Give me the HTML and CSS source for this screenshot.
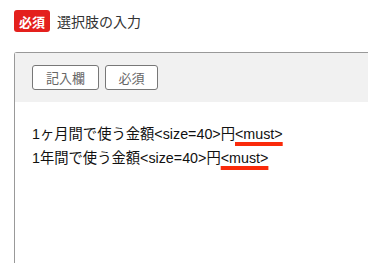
FILE: index.html
```html
<!DOCTYPE html>
<html lang="ja">
  <head>
    <meta charset="UTF-8" />
    <meta name="viewport" content="width=device-width, initial-scale=1.0" />
    <title>選択肢の入力</title>
    <link rel="stylesheet" href="styles.css">
  </head>
  <body>
    <div class="page">
      <div class="title-row">
        <span class="required-badge">必須</span>
        <h1 class="title">選択肢の入力</h1>
      </div>

      <div class="panel">
        <div class="panel-toolbar">
          <button class="tool-btn">記入欄</button>
          <button class="tool-btn">必須</button>
        </div>
        <div class="panel-body">
          <p class="line">1ヶ月間で使う金額&lt;size=40&gt;円<span class="mark">&lt;must&gt;</span></p>
          <p class="line">1年間で使う金額&lt;size=40&gt;円<span class="mark">&lt;must&gt;</span></p>
        </div>
      </div>
    </div>
  </body>
</html>
```

FILE: styles.css
```css
* {
  margin: 0;
  padding: 0;
  box-sizing: border-box;
}

html,
body {
  height: 100%;
}

body {
  font-family: "Liberation Sans", "Noto Sans CJK JP", sans-serif;
  background: white;
  color: #222;
  overflow: hidden;
}

.page {
  height: 100%;
  padding: 10px 0 0 14px;
  display: flex;
  flex-direction: column;
}

.title-row {
  display: flex;
  align-items: center;
  gap: 7px;
}

.required-badge {
  display: inline-flex;
  align-items: center;
  justify-content: center;
  width: 36px;
  height: 22px;
  background: #e4201d;
  color: white;
  font-size: 13px;
  font-weight: bold;
  border-radius: 3px;
}

.title {
  font-size: 14px;
  font-weight: normal;
  color: #333;
}

.panel {
  margin-top: 20px;
  flex: 1;
  border-top: 1px solid #999;
  border-left: 1px solid #999;
  border-top-left-radius: 3px;
}

.panel-toolbar {
  background: #f1f1f1;
  height: 49px;
  padding: 12px 0 0 17px;
  display: flex;
  gap: 6px;
  align-items: flex-start;
}

.tool-btn {
  height: 25px;
  padding: 0;
  background: white;
  border: 1px solid #777;
  border-radius: 3px;
  color: #666;
  font-family: "Liberation Sans", "Noto Sans CJK JP", sans-serif;
  font-size: 13px;
}

.tool-btn:first-child {
  width: 67px;
}

.tool-btn:last-child {
  width: 53px;
}

.panel-body {
  padding: 20px 0 0 17px;
}

.line {
  font-size: 14.3px;
  line-height: 24px;
  color: #111;
  white-space: nowrap;
}

.mark {
  text-decoration: underline;
  text-decoration-color: #fa2a0a;
  text-decoration-thickness: 4px;
  text-underline-offset: 3px;
}
```
